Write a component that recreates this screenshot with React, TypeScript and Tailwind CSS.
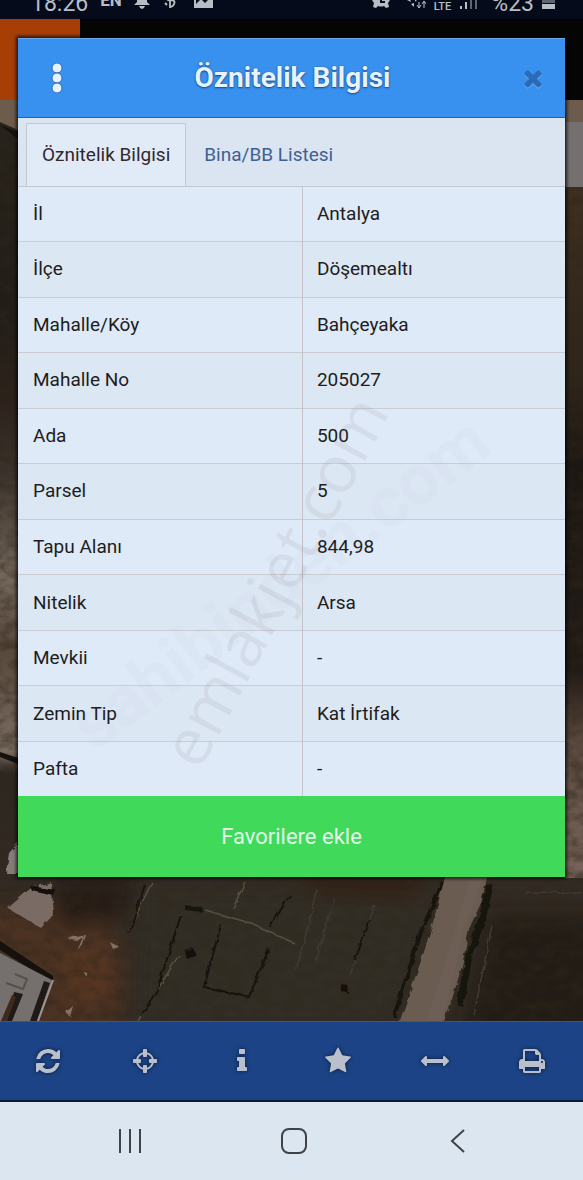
import React, { useState } from "react";

const ICONS = {
  refresh:
    "M1639 1056q0 5-1 7-64 268-268 434.5t-478 166.5q-146 0-282.5-55t-243.5-157l-129 129q-19 19-45 19t-45-19-19-45v-448q0-26 19-45t45-19h448q26 0 45 19t19 45-19 45l-137 137q71 66 161 102t187 36q134 0 250-65t186-179q11-17 53-117 8-23 30-23h192q13 0 22.5 9.5t9.5 22.5zm25-800v448q0 26-19 45t-45 19h-448q-26 0-45-19t-19-45 19-45l138-138q-148-137-349-137-134 0-250 65t-186 179q-11 17-53 117-8 23-30 23h-199q-13 0-22.5-9.5t-9.5-22.5v-7q65-268 270-434.5t480-166.5q146 0 284 55.5t245 156.5l130-129q19-19 45-19t45 19 19 45z",
  crosshairs:
    "M1325 1024h-109q-26 0-45-19t-19-45v-128q0-26 19-45t45-19h109q-32-108-112.5-188.5t-188.5-112.5v109q0 26-19 45t-45 19h-128q-26 0-45-19t-19-45v-109q-108 32-188.5 112.5t-112.5 188.5h109q26 0 45 19t19 45v128q0 26-19 45t-45 19h-109q32 108 112.5 188.5t188.5 112.5v-109q0-26 19-45t45-19h128q26 0 45 19t19 45v109q108-32 188.5-112.5t112.5-188.5zm339-192v128q0 26-19 45t-45 19h-143q-37 161-154.5 278.5t-278.5 154.5v143q0 26-19 45t-45 19h-128q-26 0-45-19t-19-45v-143q-161-37-278.5-154.5t-154.5-278.5h-143q-26 0-45-19t-19-45v-128q0-26 19-45t45-19h143q37-161 154.5-278.5t278.5-154.5v-143q0-26 19-45t45-19h128q26 0 45 19t19 45v143q161 37 278.5 154.5t154.5 278.5h143q26 0 45 19t19 45z",
  info: "M1216 1344v128q0 26-19 45t-45 19h-512q-26 0-45-19t-19-45v-128q0-26 19-45t45-19h64v-384h-64q-26 0-45-19t-19-45v-128q0-26 19-45t45-19h384q26 0 45 19t19 45v576h64q26 0 45 19t19 45zm-128-1152v192q0 26-19 45t-45 19h-256q-26 0-45-19t-19-45v-192q0-26 19-45t45-19h256q26 0 45 19t19 45z",
  star: "M1728 647q0 22-26 48l-363 354 86 500q1 7 1 20 0 21-10.5 35.5t-30.5 14.5q-19 0-40-12l-449-236-449 236q-22 12-40 12-21 0-31.5-14.5t-10.5-35.5q0-6 2-20l86-500-364-354q-25-27-25-48 0-37 56-46l502-73 225-455q19-41 49-41t49 41l225 455 502 73q56 9 56 46z",
  measure:
    "M1792 896q0 26-19 45l-256 256q-19 19-45 19t-45-19-19-45v-128h-1024v128q0 26-19 45t-45 19-45-19l-256-256q-19-19-19-45t19-45l256-256q19-19 45-19t45 19 19 45v128h1024v-128q0-26 19-45t45-19 45 19l256 256q19 19 19 45z",
  print:
    "M448 1536h896v-256h-896v256zm0-640h896v-384h-160q-40 0-68-28t-28-68v-160h-640v640zm1152 64q0-26-19-45t-45-19-45 19-19 45 19 45 45 19 45-19 19-45zm128 0v416q0 13-9.5 22.5t-22.5 9.5h-224v160q0 40-28 68t-68 28h-960q-40 0-68-28t-28-68v-160h-224q-13 0-22.5-9.5t-9.5-22.5v-416q0-79 56.5-135.5t135.5-56.5h64v-544q0-40 28-68t68-28h672q40 0 88 20t76 48l152 152q28 28 48 76t20 88v256h64q79 0 135.5 56.5t56.5 135.5z",
  close:
    "M1490 1322q0 40-28 68l-136 136q-28 28-68 28t-68-28l-294-294-294 294q-28 28-68 28t-68-28l-136-136q-28-28-28-68t28-68l294-294-294-294q-28-28-28-68t28-68l136-136q28-28 68-28t68 28l294 294 294-294q28-28 68-28t68 28l136 136q28 28 28 68t-28 68l-294 294 294 294q28 28 28 68z",
};

function Glyph({ path, className }: { path: string; className: string }) {
  return (
    <svg viewBox="0 0 1792 1792" className={className} fill="currentColor" aria-hidden="true">
      <path d={path} />
    </svg>
  );
}

const ROWS: [string, string][] = [
  ["İl", "Antalya"],
  ["İlçe", "Döşemealtı"],
  ["Mahalle/Köy", "Bahçeyaka"],
  ["Mahalle No", "205027"],
  ["Ada", "500"],
  ["Parsel", "5"],
  ["Tapu Alanı", "844,98"],
  ["Nitelik", "Arsa"],
  ["Mevkii", "-"],
  ["Zemin Tip", "Kat İrtifak"],
  ["Pafta", "-"],
];

const TOOLS: [string, string][] = [
  ["Yenile", ICONS.refresh],
  ["Konum", ICONS.crosshairs],
  ["Bilgi", ICONS.info],
  ["Favoriler", ICONS.star],
  ["Ölçüm", ICONS.measure],
  ["Yazdır", ICONS.print],
];

function StatusBar() {
  return (
    <header className="flex h-[19px] items-end justify-between overflow-hidden bg-[#060b1c] pr-7 pl-[31px] text-[#b9bec6]">
      <div className="flex items-end gap-3">
        <span className="text-[23px] leading-[31px]">18:26</span>
        <span className="pb-[7px] text-[17px] leading-[24px] font-bold">EN</span>
        <svg width="16" height="22" viewBox="0 0 16 22" className="mb-[10px]" fill="currentColor" aria-hidden="true">
          <path d="M3 4a5 5 0 0 1 10 0v11l3 3H0l3-3zM5 19h6q-1 3-3 3t-3-3z" />
        </svg>
        <svg width="16" height="22" viewBox="0 0 16 22" className="mb-[10px]" fill="none" stroke="currentColor" strokeWidth="1.8" aria-hidden="true">
          <path d="M8 4v17M8 13q6 0 4 4t-4 2M10 10q-5-2-5 1t4 2M3 16l2 2" />
        </svg>
        <svg width="19" height="18" viewBox="0 0 19 18" className="mb-[11px] ml-1" aria-hidden="true">
          <path fill="currentColor" fillRule="evenodd" d="M0 0h19v18H0zM2 14l5-5 4 4 6-6V3H2z" />
        </svg>
      </div>
      <div className="flex items-end gap-2">
        <svg width="18" height="20" viewBox="0 0 18 20" className="mb-[11px]" fill="currentColor" aria-hidden="true">
          <path fillRule="evenodd" d="M9 0a9 9 0 0 1 7 15l1 4-3 1-2-2q-3 1-6 0l-2 2-3-1 1-4A9 9 0 0 1 9 0zM8 6v9h5v-2h-3V6z" />
        </svg>
        <svg width="20" height="14" viewBox="0 0 20 14" className="mb-[10px] ml-2" fill="currentColor" aria-hidden="true">
          <path d="M1 5l3-1 1 3zM5 9l3-1 0 4zM8 4l3-1-1 4z" />
          <path d="M13 7v6M11 10l2 3 2-3M18 13V6M16 9l2-3 2 3" stroke="currentColor" fill="none" />
        </svg>
        <span className="pb-[6px] text-[11px] leading-[13px] font-medium">LTE</span>
        <svg width="20" height="20" viewBox="0 0 20 20" className="mr-1 mb-[10px]" fill="currentColor" aria-hidden="true">
          <path d="M1 17h2v3H1zM6 13h2v7H6z" />
          <path opacity=".5" d="M11 8h2v12h-2zM16 3h2v17h-2z" />
        </svg>
        <span className="text-[23px] leading-[31px]">%23</span>
        <svg width="13" height="18" viewBox="0 0 13 18" className="mb-[10px]" fill="currentColor" aria-hidden="true">
          <path opacity=".5" d="M0 0h13v12H0z" />
          <path d="M0 13h13v5H0z" />
        </svg>
      </div>
    </header>
  );
}

function SatelliteMap() {
  return (
    <svg
      viewBox="0 19 583 1002"
      preserveAspectRatio="none"
      className="absolute inset-0 h-full w-full"
      role="img"
      aria-label="Uydu haritası"
    >
      <defs>
        <filter id="grain" x="0" y="0" width="100%" height="100%">
          <feTurbulence type="fractalNoise" baseFrequency="0.07 0.1" numOctaves="5" seed="7" />
          <feColorMatrix values="0 0 0 0 0.03  0 0 0 0 0.02  0 0 0 0 0.01  2.4 0 0 0 -0.9" />
        </filter>
        <filter id="rough" x="-5%" y="-5%" width="110%" height="110%">
          <feTurbulence type="fractalNoise" baseFrequency="0.1" numOctaves="2" seed="3" />
          <feDisplacementMap in="SourceGraphic" scale="5" />
          <feGaussianBlur stdDeviation="0.6" />
        </filter>
        <filter id="soft" x="-5%" y="-5%" width="110%" height="110%">
          <feGaussianBlur stdDeviation="9" />
        </filter>
        <linearGradient id="west" x1="0" x2="0" y1="130" y2="878" gradientUnits="userSpaceOnUse">
          <stop offset="0" stopColor="#27221b" />
          <stop offset=".25" stopColor="#211d18" />
          <stop offset=".36" stopColor="#2c221c" />
          <stop offset=".46" stopColor="#3c332c" />
          <stop offset=".6" stopColor="#74675b" />
          <stop offset=".7" stopColor="#5a4a3e" />
          <stop offset=".83" stopColor="#7a6c60" />
          <stop offset=".86" stopColor="#2d2822" />
          <stop offset="1" stopColor="#332a24" />
        </linearGradient>
        <linearGradient id="east" x1="0" x2="0" y1="187" y2="878" gradientUnits="userSpaceOnUse">
          <stop offset="0" stopColor="#3e2f21" />
          <stop offset=".28" stopColor="#2e251b" />
          <stop offset=".4" stopColor="#1d1713" />
          <stop offset=".7" stopColor="#211a16" />
          <stop offset=".8" stopColor="#5a493e" />
          <stop offset="1" stopColor="#78645a" />
        </linearGradient>
      </defs>
      <rect y="19" width="583" height="1002" fill="#322b24" />
      <path fill="url(#west)" d="M0 100h18v778H0z" />
      <path fill="url(#east)" d="M565 187h18v691h-18z" />
      <g filter="url(#soft)">
        <path fill="#4c3224" d="M-20 905l120 0 25 50-5 90H-20z" />
        <path fill="#322f28" d="M140 890h290l-45 140H135z" />
        <path fill="#271e18" d="M55 878h80l-10 40-65 10z" />
        <path fill="#241b16" d="M490 915h120v130H460z" />
        <path fill="#332118" d="M290 870h140l-15 30-100-5z" />
        <path fill="#573523" d="M60 955l45-10 10 45-45 20z" />
      </g>
      <rect y="100" width="583" height="921" filter="url(#grain)" opacity=".5" />
      <g filter="url(#rough)">
        <path fill="#7a6c65" d="M8 908l23-20 20-6 3 32-13 14-20-12z" />
        <path fill="#857c78" d="M9 853l9-10v30H6z" />
        <path fill="none" stroke="#57503f" strokeWidth="1.5" d="M152 882l-24 50M179 955l-41 66M205 910l45 13 44 20M245 882l-12 26" />
        <path fill="none" stroke="#403a30" strokeWidth="1.5" d="M318 890l-22 80M375 905l-25 70M525 893h58M492 925l-18 90M335 900l-20 60" />
        <path fill="none" stroke="#15120f" strokeWidth="2" d="M145 885l-16 48M181 915l-24 75-16 26M221 925l-17 62 45 10 20-48M290 895l-20 32M370 920l-15 40" />
        <path fill="none" stroke="#15120f" strokeWidth="4" d="M185 908l18 2M443 882l-22 50-27 85" />
        <path fill="none" stroke="#17120f" strokeWidth="7" d="M490 885l-8 34-14 42-8 45" />
        <path fill="#15110e" d="M185 951l8-3 3 8-9 3zM340 983l8 3 1 8-8-3zM30 886l26 4-2 6-22-5z" />
        <path fill="#85705e" d="M77 951l6-14-6 4-9-2 8-3 9-2-3 10zM110 942l9 5-6 2zM66 1012l7-6-3 11zM84 973l5 1-3 2z" />
        <path fill="#6a5b51" d="M447 870h42l-8 33-12 26-7 37-18 60h-46l25-71 10-33z" />
      </g>
      <path fill="#74655c" opacity=".4" d="M470 878h12l-7 25-12 26-7 37-14 55h-16l26-80z" />
      <path fill="#15110e" d="M0 941l53 35v7L0 950z" />
      <path fill="#75706e" d="M0 953l52 27-14 41H0z" />
      <path fill="#201a17" d="M44 981l6 2-13 38h-7zM14 992l9 2-11 27H7z" />
      <path fill="#3d2a1c" d="M12 995l4 2-9 24H1z" />
      <path fill="none" stroke="#9b9492" strokeWidth="2" d="M53 980l-15 41" />
      <path fill="none" stroke="#575048" strokeWidth="2" d="M6 983l17 6 4-10-12-5" />
      <path fill="#15110e" d="M0 752l18 6v6L0 757zM0 125l18 7v7z" />
      <path fill="#050505" d="M0 19h583v81H0z" />
      <path fill="#a73e05" d="M0 19h80v81H0z" />
      <path fill="#6d5b4c" d="M0 100h18v30L0 122zM565 100h18v22h-18z" />
      <path fill="#75706f" d="M565 122h18v65h-18z" />
    </svg>
  );
}

function Dialog() {
  const [tab, setTab] = useState(0);
  const tabs = ["Öznitelik Bilgisi", "Bina/BB Listesi"];
  return (
    <section
      aria-label="Öznitelik Bilgisi"
      className="relative mx-[18px] mt-[19px] overflow-hidden bg-[#dfe9f5] shadow-[0_0_3px_2px_rgba(0,0,0,0.7)]"
    >
      <div className="flex h-20 items-center justify-between border-t border-b border-t-[#63a9ee] border-b-[#2b62a5] bg-[#3891ee] pr-5 pl-8">
        <button type="button" aria-label="Menü">
          <svg width="14" height="30" viewBox="0 0 14 30" fill="#e6f3ff" stroke="#2b6db5" strokeWidth="1" aria-hidden="true">
            <circle cx="7" cy="5" r="5" />
            <circle cx="7" cy="15" r="5" />
            <circle cx="7" cy="25" r="5" />
          </svg>
        </button>
        <h1 className="text-[28px] leading-8 font-bold text-[#e6f3ff] [text-shadow:0_0_1px_#174a85,0_1px_2px_#174a85]">
          Öznitelik Bilgisi
        </h1>
        <button type="button" aria-label="Kapat" className="flex w-6 justify-center text-[#2a6ab8]">
          <Glyph path={ICONS.close} className="size-[26px] shrink-0 drop-shadow-[0_1px_0_#6db3f5]" />
        </button>
      </div>

      <div role="tablist" className="flex h-[69px] border-b border-[#c3c8d0] bg-[#dae5f1] pt-[5px] pl-2">
        {tabs.map((label, i) => (
          <button
            key={label}
            type="button"
            role="tab"
            aria-selected={tab === i}
            onClick={() => setTab(i)}
            className={
              tab === i
                ? "border border-b-0 border-[#c3c8d0] bg-[#e1ebf7] px-[15px] text-[19px] text-[#33272c]"
                : "border-t border-transparent px-[18px] text-[19px] text-[#3f5f92]"
            }
          >
            {label}
          </button>
        ))}
      </div>

      <table className="h-[609px] w-full border-collapse text-[19px] leading-6 text-[#221c20]">
        <tbody>
          {ROWS.map(([name, value]) => (
            <tr key={name} className="border-b border-[#c9cdd3] odd:bg-[#deeaf7] even:bg-[#dce7f4] last:border-b-0">
              <th scope="row" className="w-[52%] border-r border-[#c3c3cb] px-[15px] text-left font-normal">
                {name}
              </th>
              <td className="px-[14px]">{value}</td>
            </tr>
          ))}
        </tbody>
      </table>

      <button type="button" className="block h-[81px] w-full bg-[#41d95a] text-[22px] text-[#e0f7e8]">
        Favorilere ekle
      </button>

      <div className="pointer-events-none absolute inset-0 flex items-center justify-center pr-6" aria-hidden="true">
        <span className="absolute top-[510px] rotate-[-37deg] text-[70px] leading-none font-bold text-[#8b8890]/3">
          sahibinden.com
        </span>
      </div>
      <div className="pointer-events-none absolute inset-0 flex items-center justify-center pr-9" aria-hidden="true">
        <span className="absolute top-[510px] rotate-[-62deg] font-['Open_Sans'] text-[65px] leading-none text-[#8b7f86]/12">
          emlakjet.com
        </span>
      </div>
    </section>
  );
}

export default function App() {
  return (
    <div className="flex min-h-screen flex-col bg-[#dbe6f1] font-[Roboto,sans-serif]">
      <StatusBar />
      <main className="relative flex-1">
        <SatelliteMap />
        <Dialog />
      </main>
      <nav
        aria-label="Harita araçları"
        className="grid h-[81px] grid-cols-6 border-t border-b-2 border-t-[#3b5688] border-b-[#0b1a30] bg-[#1c4385] pr-[3px]"
      >
        {TOOLS.map(([label, path]) => (
          <button key={label} type="button" aria-label={label} className="flex items-center justify-center text-[#b9bfcb]">
            <Glyph path={path} className="size-7 drop-shadow-[0_0_2px_#0a1a38]" />
          </button>
        ))}
      </nav>
      <footer className="flex h-[78px] items-center justify-center gap-[139px] pl-1 text-[#3f4246]">
        <button type="button" aria-label="Son uygulamalar">
          <svg width="24" height="26" viewBox="0 0 24 26" stroke="currentColor" strokeWidth="2" aria-hidden="true">
            <path d="M2 1v24M12 1v24M22 1v24" />
          </svg>
        </button>
        <button type="button" aria-label="Ana ekran">
          <svg width="26" height="26" viewBox="0 0 26 26" fill="none" stroke="currentColor" strokeWidth="2" aria-hidden="true">
            <rect x="1" y="1" width="24" height="24" rx="7" />
          </svg>
        </button>
        <button type="button" aria-label="Geri">
          <svg width="24" height="26" viewBox="0 0 24 26" fill="none" stroke="currentColor" strokeWidth="2" aria-hidden="true">
            <path d="M18 2L6 13l12 11" />
          </svg>
        </button>
      </footer>
    </div>
  );
}
